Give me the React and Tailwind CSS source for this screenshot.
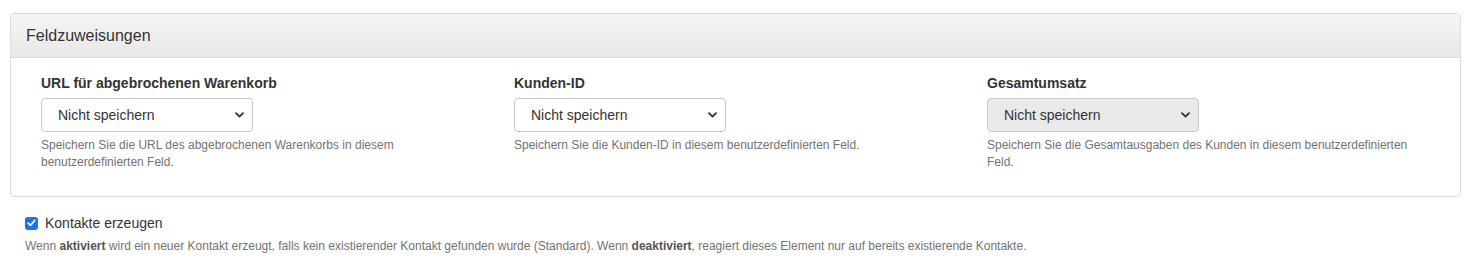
import React from "react";

function Chevron() {
  return (
    <svg width="9" height="6" viewBox="0 0 9 6" className="shrink-0">
      <path d="M1 1.2 L4.5 4.6 L8 1.2" fill="none" stroke="#333" strokeWidth="1.8" strokeLinecap="round" strokeLinejoin="round" />
    </svg>
  );
}

function FakeSelect({ disabled }) {
  return (
    <div
      className={
        "flex h-[34px] w-[212px] items-center justify-between rounded-[4px] border border-[#c8c8c8] pl-[16px] pr-[8px] text-[14px] text-[#333] " +
        (disabled ? "bg-[#eaeaea]" : "bg-white")
      }
    >
      <span>Nicht speichern</span>
      <Chevron />
    </div>
  );
}

function Field({ label, help, disabled }) {
  return (
    <div className="px-[15px]">
      <div className="mb-[5px] text-[14px] font-bold leading-[20px] text-[#333]">{label}</div>
      <FakeSelect disabled={disabled} />
      <p className="mt-[5px] text-[12px] leading-[17px] text-[#737373]">{help}</p>
    </div>
  );
}

export default function App() {
  return (
    <div className="bg-white pl-[10px] pr-[12px] pt-[13px] font-['Liberation_Sans',Arial,sans-serif] text-[#333]">
      <div className="rounded-[4px] border border-[#dcdcdc] bg-white">
        <div className="rounded-t-[4px] border-b border-[#dcdcdc] bg-gradient-to-b from-[#f5f5f5] to-[#e8e8e8] px-[15px] py-[10px] text-[16px] leading-[23px] text-[#333]">
          Feldzuweisungen
        </div>
        <div className="px-[15px] pb-[25px] pt-[15px]">
          <div className="grid grid-cols-3">
            <Field
              label="URL für abgebrochenen Warenkorb"
              help="Speichern Sie die URL des abgebrochenen Warenkorbs in diesem benutzerdefinierten Feld."
            />
            <Field
              label="Kunden-ID"
              help="Speichern Sie die Kunden-ID in diesem benutzerdefinierten Feld."
            />
            <Field
              label="Gesamtumsatz"
              help="Speichern Sie die Gesamtausgaben des Kunden in diesem benutzerdefinierten Feld."
              disabled
            />
          </div>
        </div>
      </div>
      <div className="px-[15px] pt-[16px]">
        <label className="flex items-center gap-[7px] text-[14px] leading-[20px] text-[#333]">
          <span className="flex h-[13px] w-[13px] items-center justify-center rounded-[3px] bg-[#1a73f0]">
            <svg width="9" height="8" viewBox="0 0 9 8">
              <path d="M1.2 4.2 L3.5 6.4 L7.8 1.3" fill="none" stroke="white" strokeWidth="1.7" strokeLinecap="round" strokeLinejoin="round" />
            </svg>
          </span>
          Kontakte erzeugen
        </label>
        <p className="mt-[5px] text-[12px] leading-[17px] text-[#737373]">
          Wenn <b className="text-[#555]">aktiviert</b> wird ein neuer Kontakt erzeugt, falls kein existierender Kontakt gefunden wurde (Standard). Wenn <b className="text-[#555]">deaktiviert</b>, reagiert dieses Element nur auf bereits existierende Kontakte.
        </p>
      </div>
    </div>
  );
}
